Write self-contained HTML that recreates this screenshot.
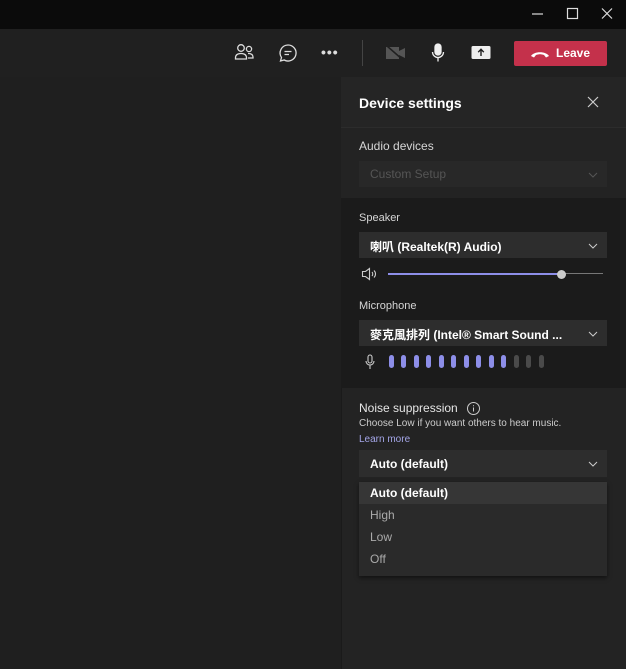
<!DOCTYPE html>
<html><head><meta charset="utf-8"><style>
*{margin:0;padding:0;box-sizing:border-box}
body{width:626px;height:669px;background:#1f1f1f;font-family:"Liberation Sans","Noto Sans CJK TC",sans-serif;position:relative;overflow:hidden;color:#fff}
.abs{position:absolute}
.t{font-size:11px;color:#d6d6d6}
.dd{position:absolute;left:359px;width:248px;height:26px;background:#2d2d2d;font-size:12px;font-weight:bold;padding:6px 11px}
.chev{position:absolute;right:9px;top:10px}
.bar{position:absolute;top:355px;width:5px;height:13px;border-radius:3px;background:#8d8ee8}
</style></head><body>
<div class="abs" style="left:0;top:0;width:626px;height:29px;background:#0b0b0b"></div>
<svg class="abs" style="left:528px;top:6px" width="90" height="16"><path d="M4 8h11" stroke="#ddd" stroke-width="1.2"/><rect x="39.5" y="2.5" width="10" height="10" fill="none" stroke="#ddd" stroke-width="1.2"/><path d="M74 2.5l10 10M84 2.5l-10 10" stroke="#ddd" stroke-width="1.2"/></svg>
<div class="abs" style="left:0;top:29px;width:626px;height:48px;background:#202020"></div>
<svg class="abs" style="left:234px;top:43px" width="22" height="20" fill="none" stroke="#ddd" stroke-width="1.3"><circle cx="7" cy="5" r="3.3"/><circle cx="15" cy="6" r="2.6"/><path d="M1.5 15c0-3 2-4.5 5.5-4.5s5.5 1.5 5.5 4.5v1H1.5z"/><path d="M14 10.5c3 0 5 1 5 3.5v1h-5"/></svg>
<svg class="abs" style="left:278px;top:43px" width="20" height="20" fill="none" stroke="#ddd" stroke-width="1.3"><path d="M10 2a8 8 0 1 1-3.8 15L2.5 18l1-3.5A8 8 0 0 1 10 2z"/><path d="M6.5 8.5h7M6.5 11.5h4.5"/></svg>
<div class="abs" style="left:321px;top:44px;font-size:14px;color:#ddd;font-weight:bold;letter-spacing:1px">•••</div>
<div class="abs" style="left:362px;top:40px;width:1px;height:26px;background:#444"></div>
<svg class="abs" style="left:385px;top:45px" width="22" height="16"><rect x="1" y="2" width="13" height="12" fill="#555"/><path d="M14 6l6-3v10l-6-3z" fill="#555"/><path d="M2 1l16 14" stroke="#202020" stroke-width="1.5"/></svg>
<svg class="abs" style="left:430px;top:43px" width="16" height="20" fill="none" stroke="#eee" stroke-width="1.3"><rect x="5" y="1" width="6" height="11" rx="3" fill="#eee"/><path d="M2.5 9a5.5 5.5 0 0 0 11 0M8 14.5v4"/></svg>
<svg class="abs" style="left:471px;top:45px" width="20" height="15"><rect x="0.5" y="1" width="19" height="13" rx="1.5" fill="#eee"/><path d="M10 11V4.5M7.2 7.2L10 4.3l2.8 2.9" stroke="#202020" stroke-width="1.4" fill="none"/></svg>
<div class="abs" style="left:514px;top:41px;width:93px;height:25px;background:#c4314b;border-radius:2px"></div>
<svg class="abs" style="left:530px;top:49px" width="20" height="10"><path d="M1 7c3-5 15-5 18 0l-3 1.5-2-2.5c-3-1-5-1-8 0l-2 2.5z" fill="#fff"/></svg>
<div class="abs" style="left:556px;top:46px;font-size:12px;font-weight:bold;color:#fff">Leave</div>

<div class="abs" style="left:341px;top:77px;width:285px;height:592px;background:#232323;border-left:1px solid #1a1a1a"></div>
<div class="abs" style="left:341px;top:77px;width:285px;height:50px;background:#252525"></div>
<div class="abs" style="left:359px;top:95px;font-size:14px;font-weight:bold">Device settings</div>
<svg class="abs" style="left:587px;top:96px" width="12" height="12"><path d="M1 1l10 10M11 1L1 11" stroke="#ccc" stroke-width="1.2"/></svg>
<div class="abs" style="left:341px;top:127px;width:285px;height:71px;background:#232323;border-top:1px solid #2c2c2c"></div>
<div class="abs t" style="left:359px;top:139px;font-size:12px">Audio devices</div>
<div class="dd" style="top:161px;background:#282828;color:#555;font-weight:normal">Custom Setup<svg class="chev" width="10" height="8"><path d="M1 2l4 4 4-4" stroke="#555" fill="none"/></svg></div>

<div class="abs" style="left:341px;top:198px;width:285px;height:190px;background:#1b1b1b"></div>
<div class="abs t" style="left:359px;top:212px;font-size:11px">Speaker</div>
<div class="dd" style="top:232px">喇叭 (Realtek(R) Audio)<svg class="chev" width="10" height="8"><path d="M1 2l4 4 4-4" stroke="#ccc" fill="none"/></svg></div>
<svg class="abs" style="left:361px;top:267px" width="18" height="14" fill="none" stroke="#ccc" stroke-width="1.1"><path d="M1.5 4.5h3l4-3v11l-4-3h-3z"/><path d="M11 5c1 1 1 3 0 4M13 3.5c2 2 2 5 0 7"/></svg>
<div class="abs" style="left:388px;top:273px;width:174px;height:2px;background:#8d8ee8"></div>
<div class="abs" style="left:562px;top:273px;width:41px;height:1px;background:#777"></div>
<div class="abs" style="left:557px;top:270px;width:9px;height:9px;border-radius:50%;background:#ccc"></div>
<div class="abs t" style="left:359px;top:300px;font-size:11px">Microphone</div>
<div class="dd" style="top:320px">麥克風排列 (Intel® Smart Sound ...<svg class="chev" width="10" height="8"><path d="M1 2l4 4 4-4" stroke="#ccc" fill="none"/></svg></div>
<svg class="abs" style="left:364px;top:354px" width="12" height="16" fill="none" stroke="#ccc" stroke-width="1.1"><rect x="4" y="1" width="4" height="8" rx="2"/><path d="M2 7a4 4 0 0 0 8 0M6 11v4"/></svg>
<div class="bar" style="left:389px"></div><div class="bar" style="left:401px"></div><div class="bar" style="left:414px"></div><div class="bar" style="left:426px"></div><div class="bar" style="left:439px"></div><div class="bar" style="left:451px"></div><div class="bar" style="left:464px"></div><div class="bar" style="left:476px"></div><div class="bar" style="left:489px"></div><div class="bar" style="left:501px"></div>
<div class="bar" style="left:514px;background:#4a4a4a"></div><div class="bar" style="left:526px;background:#4a4a4a"></div><div class="bar" style="left:539px;background:#4a4a4a"></div>

<div class="abs" style="left:359px;top:401px;font-size:12px;color:#e6e6e6">Noise suppression</div>
<svg class="abs" style="left:466px;top:401px" width="15" height="15" fill="none" stroke="#ccc"><circle cx="7.5" cy="7.5" r="6"/><path d="M7.5 6.5v4M7.5 4.3v1"/></svg>
<div class="abs" style="left:359px;top:418px;font-size:10px;color:#ccc">Choose Low if you want others to hear music.</div>
<div class="abs" style="left:359px;top:434px;font-size:10px;color:#a4a6e8">Learn more</div>
<div class="dd" style="top:450px;height:27px;padding-top:7px">Auto (default)<svg class="chev" width="10" height="8"><path d="M1 2l4 4 4-4" stroke="#ccc" fill="none"/></svg></div>
<div class="abs" style="left:359px;top:482px;width:248px;height:94px;background:#2a2a2a;box-shadow:0 2px 4px rgba(0,0,0,.5)"></div>
<div class="abs" style="left:359px;top:482px;width:248px;height:22px;background:#363636"></div>
<div class="abs" style="left:370px;top:486px;font-size:12px;font-weight:bold">Auto (default)</div>
<div class="abs" style="left:370px;top:508px;font-size:12px;color:#aaa">High</div>
<div class="abs" style="left:370px;top:530px;font-size:12px;color:#aaa">Low</div>
<div class="abs" style="left:370px;top:552px;font-size:12px;color:#aaa">Off</div>
</body></html>
